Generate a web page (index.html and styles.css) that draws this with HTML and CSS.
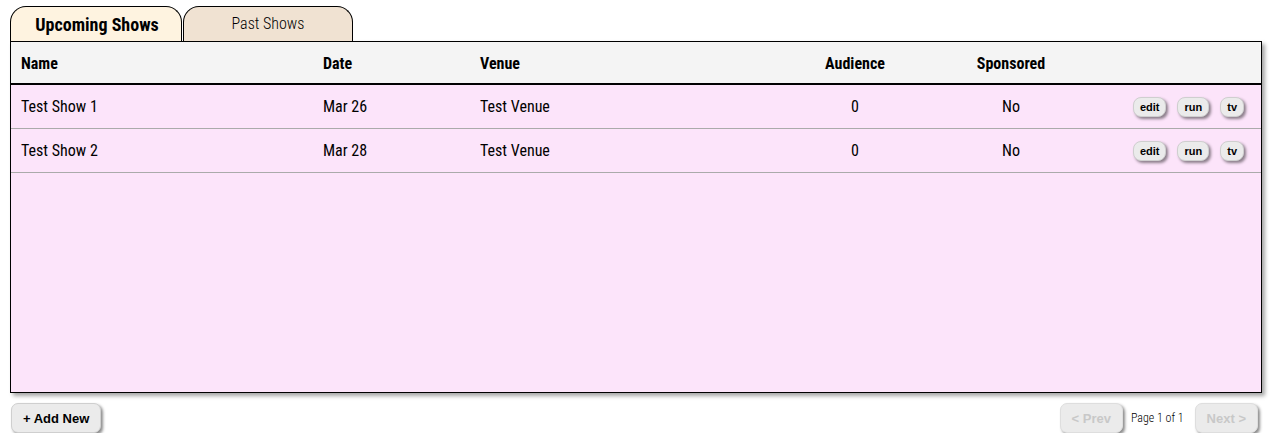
FILE: index.html
```html
<!DOCTYPE html>
<html>
<head>
<meta charset="utf-8">
<link rel="stylesheet" href="styles.css">
</head>
<body>
<div class="page">
  <div class="tabs">
    <div class="tab active">Upcoming Shows</div>
    <div class="tab">Past Shows</div>
  </div>
  <div class="panel">
    <div class="row head">
      <div class="c name">Name</div>
      <div class="c date">Date</div>
      <div class="c venue">Venue</div>
      <div class="c aud">Audience</div>
      <div class="c spon">Sponsored</div>
      <div class="c act"></div>
    </div>
    <div class="row item">
      <div class="c name">Test Show 1</div>
      <div class="c date">Mar 26</div>
      <div class="c venue">Test Venue</div>
      <div class="c aud">0</div>
      <div class="c spon">No</div>
      <div class="c act"><button class="btn sm">edit</button><button class="btn sm">run</button><button class="btn sm">tv</button></div>
    </div>
    <div class="row item">
      <div class="c name">Test Show 2</div>
      <div class="c date">Mar 28</div>
      <div class="c venue">Test Venue</div>
      <div class="c aud">0</div>
      <div class="c spon">No</div>
      <div class="c act"><button class="btn sm">edit</button><button class="btn sm">run</button><button class="btn sm">tv</button></div>
    </div>
  </div>
  <div class="footer">
    <button class="btn big">+ Add New</button>
    <div class="pager">
      <button class="btn big dis">&lt; Prev</button>
      <span class="pinfo">Page 1 of 1</span>
      <button class="btn big dis">Next &gt;</button>
    </div>
  </div>
</div>
</body>
</html>
```
FILE: styles.css
```css
html, body { margin: 0; padding: 0; background: #fff; }
body { font-family: "Roboto Condensed", Roboto, "Liberation Sans", sans-serif; color: #000; }
.page { padding: 6px 14px 0 10px; }
.tabs { display: flex; height: 35px; }
.tab {
  width: 170px; height: 35px; box-sizing: border-box;
  border: 1px solid #000; border-bottom: none;
  border-radius: 16px 16px 0 0;
  background: #f0e2d2;
  text-align: center; font-size: 16px; line-height: 33px;
  font-weight: 300;
}
.tab.active { width: 172px; background: #fef3e0; font-weight: 700; font-size: 18px; line-height: 36px; padding-left: 2px; }
.tab + .tab { margin-left: 1px; }
.panel {
  height: 352px; box-sizing: border-box;
  border: 1px solid #000; background: #fce4fa;
  box-shadow: 3px 3px 4px rgba(0,0,0,0.35);
}
.row { display: grid; grid-template-columns: 302px 157px 304px 162px 150px 1fr; align-items: center; }
.head { background: #f4f4f4; border-bottom: 2px solid #000; font-weight: 700; font-size: 16px; padding-top: 1px; height: 40px; }
.item { height: 43px; border-bottom: 1px solid #aaa; font-size: 16px; font-weight: 400; }
.c { padding-left: 10px; }
.aud, .spon { text-align: center; padding-left: 0; }
.act { display: flex; justify-content: flex-end; gap: 11px; padding-right: 17px; }
.btn {
  font-family: "Liberation Sans", Arial, Helvetica, sans-serif; font-weight: 700;
  background: #ebebeb; border: 1px solid #cfcfcf; color: #000;
  box-shadow: 2px 2px 3px rgba(0,0,0,0.45); cursor: pointer;
}
.btn.sm { font-size: 11px; height: 20px; border-radius: 8px; padding: 0 6px; }
.btn.big { font-size: 13px; height: 30px; border-radius: 7px; padding: 0 11px; }
.btn.dis { color: #c8c8c8; border-color: #dedede; padding: 0 11px; }
.footer { display: flex; justify-content: space-between; align-items: center; margin-top: 10px; padding-left: 1px; padding-right: 4px; }
.pager { display: flex; align-items: center; }
.pinfo { font-size: 12px; font-weight: 300; margin: 0 11px 0 8px; }
```
